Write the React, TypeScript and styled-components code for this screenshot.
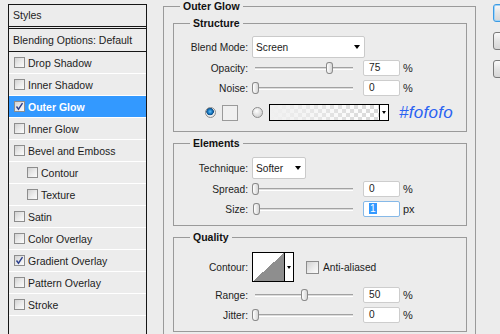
import styled, { createGlobalStyle } from "styled-components";

const GlobalStyle = createGlobalStyle`
  html, body {
    margin: 0;
    padding: 0;
  }
  body {
    background: #ececec;
    overflow: hidden;
    font-family: "Liberation Sans", Arial, sans-serif;
    font-size: 10.2px;
    color: #1c1c1c;
  }
`;

const Window = styled.div`
  display: flex;
  align-items: flex-start;
  width: 500px;
  height: 334px;
  padding-left: 8px;
  box-sizing: border-box;
  overflow: hidden;
`;

// ---- left list of layer styles ----
const StylesPanel = styled.div`
  flex: none;
  width: 139px;
  height: 340px;
  margin-top: 4px;
  border: 1px solid #161616;
  border-bottom: none;
  box-sizing: border-box;
  font-size: 10.5px;
`;

const PanelHeader = styled.div`
  height: 21px;
  line-height: 21px;
  padding-left: 4px;
  border-bottom: 3px double #161616;
`;

const BlendingRow = styled.div`
  height: 22px;
  line-height: 22px;
  padding-left: 4px;
  border-bottom: 1px solid #161616;
`;

const StyleItem = styled.div<{ $selected?: boolean; $sub?: boolean }>`
  display: flex;
  align-items: center;
  gap: 3px;
  height: 21px;
  padding-left: ${(p) => (p.$sub ? 18 : 5)}px;
  border-bottom: 1px solid #ffffff;
  background: ${(p) => (p.$selected ? "#3399ff" : "transparent")};
  color: ${(p) => (p.$selected ? "#ffffff" : "#1c1c1c")};
  font-weight: ${(p) => (p.$selected ? "bold" : "normal")};
`;

const CheckBox = styled.span<{ $size?: number; $ml?: number }>`
  flex: none;
  display: flex;
  align-items: center;
  justify-content: center;
  width: ${(p) => p.$size ?? 11}px;
  height: ${(p) => p.$size ?? 11}px;
  margin-left: ${(p) => p.$ml ?? 0}px;
  box-sizing: border-box;
  border: 1px solid #8d8d8d;
  background: linear-gradient(135deg, #d2d2d2 0%, #ececec 55%, #fbfbfb 100%);
`;

// ---- effect settings ----
const EffectGroup = styled.fieldset`
  flex: none;
  width: 313px;
  min-height: 350px;
  margin: 0 0 0 16px;
  padding: 4px 8px 0 9px;
  border: 1px solid #9a9a9a;
  box-sizing: border-box;
`;

const Legend = styled.legend<{ $inset: number }>`
  margin-left: ${(p) => p.$inset}px;
  padding: 0 3px;
  font-size: 10.5px;
  font-weight: bold;
  line-height: 13px;
  color: #111;
`;

const Group = styled.fieldset<{ $top: number; $bottom: number }>`
  margin: 0 0 5px;
  padding: ${(p) => p.$top}px 0 ${(p) => p.$bottom}px;
  border: 1px solid #9a9a9a;
  min-width: 0;
`;

const Row = styled.div<{ $mt?: number; $h?: number }>`
  display: flex;
  align-items: center;
  height: ${(p) => p.$h ?? 16}px;
  margin-top: ${(p) => p.$mt ?? 0}px;
`;

const Label = styled.span`
  flex: none;
  width: 74px;
  margin-right: 4px;
  text-align: right;
`;

const Select = styled.div<{ $w: number }>`
  flex: none;
  display: flex;
  align-items: center;
  justify-content: space-between;
  width: ${(p) => p.$w}px;
  height: 22px;
  padding: 0 4px 0 3px;
  box-sizing: border-box;
  border: 1px solid #cacaca;
  border-radius: 2px;
  background: #ffffff;
`;

const Arrow = styled.span`
  width: 0;
  height: 0;
  border-top: 4px solid #000;
  border-left: 3.5px solid transparent;
  border-right: 3.5px solid transparent;
`;

const Slider = styled.div`
  position: relative;
  flex: none;
  width: 101px;
  height: 16px;
`;

const Track = styled.div`
  position: absolute;
  left: 3px;
  right: 0;
  top: 7px;
  height: 1px;
  border-top: 1px solid #a2a2a2;
  border-bottom: 1px solid #ffffff;
  background: #dcdcdc;
`;

const Thumb = styled.div`
  position: absolute;
  top: 2px;
  width: 7px;
  height: 12px;
  box-sizing: border-box;
  border: 1px solid #8a8a8a;
  border-radius: 3px 3px 3px 3px / 3px 3px 4px 4px;
  background: linear-gradient(to right, #ffffff, #d6d6d6);
`;

const NumberField = styled.div<{ $focus?: boolean }>`
  flex: none;
  width: 37px;
  height: 16px;
  margin-left: 10px;
  padding-left: 5px;
  box-sizing: border-box;
  border: 1px solid ${(p) => (p.$focus ? "#86b9e8" : "#cdcdcd")};
  border-radius: 2px;
  background: #ffffff;
  line-height: 14px;
`;

const Selected = styled.span`
  background: #3399ff;
  color: #ffffff;
  padding: 0 1px;
`;

const Unit = styled.span`
  margin-left: 3px;
  font-size: 11px;
`;

const Radio = styled.span<{ $on?: boolean; $ml: number }>`
  flex: none;
  width: 11px;
  height: 11px;
  margin-left: ${(p) => p.$ml}px;
  box-sizing: border-box;
  border: 1px solid #8c8c8c;
  border-radius: 50%;
  background: ${(p) =>
    p.$on
      ? "radial-gradient(circle at 45% 40%, #6fc3f5 0, #1c7fc8 2px, #0b4a83 3.5px, #f2f2f2 4px, #d8d8d8 100%)"
      : "radial-gradient(circle at 40% 35%, #ffffff 0, #e8e8e8 3px, #c6c6c6 100%)"};
`;

const Swatch = styled.span`
  flex: none;
  width: 16px;
  height: 16px;
  margin-left: 6px;
  box-sizing: border-box;
  border: 1px solid #9a9a9a;
  background: #f0f0f0;
`;

const GradientPicker = styled.div`
  flex: none;
  display: flex;
  width: 120px;
  height: 17px;
  margin-left: 6px;
  box-sizing: border-box;
  border: 1px solid #000;
`;

const GradientPreview = styled.div`
  flex: 1;
  background: linear-gradient(to right, #f0f0f0 0%, rgba(240, 240, 240, 0) 100%),
    repeating-conic-gradient(#d8d8d8 0 25%, #ffffff 0 50%) 0 0 / 8px 8px;
`;

const PickerButton = styled.div`
  flex: none;
  display: flex;
  align-items: center;
  justify-content: center;
  width: 8px;
  border-left: 1px solid #000;
  background: #ffffff;
`;

const SmallArrow = styled.span`
  width: 0;
  height: 0;
  border-top: 3px solid #000;
  border-left: 2.5px solid transparent;
  border-right: 2.5px solid transparent;
`;

const ColorNote = styled.span`
  margin-left: 10px;
  font-size: 17px;
  font-style: italic;
  color: #2a62f2;
  letter-spacing: 0.3px;
`;

const ContourPicker = styled.div`
  flex: none;
  display: flex;
  width: 42px;
  height: 30px;
  box-sizing: border-box;
  border: 1px solid #000;
`;

const ContourPreview = styled.div`
  flex: 1;
  background: linear-gradient(to top left, #8e8e8e 50%, #ffffff 50%);
`;

const CheckLabel = styled.span`
  margin-left: 4px;
`;

// ---- dialog buttons (labels sit outside the visible window) ----
const ButtonColumn = styled.div`
  flex: none;
  display: flex;
  flex-direction: column;
  gap: 10px;
  margin: 4px 0 0 17px;
`;

const DialogButton = styled.button<{ $default?: boolean }>`
  width: 80px;
  height: 18px;
  padding: 0;
  border: 1px solid ${(p) => (p.$default ? "#3c9be4" : "#7a7a7a")};
  border-radius: 3px;
  background: linear-gradient(#fafafa, #e4e4e4 50%, #d6d6d6);
  box-shadow: ${(p) => (p.$default ? "inset 0 0 0 1px #9fd3f7" : "none")};
`;

const styleItems = [
  { label: "Drop Shadow" },
  { label: "Inner Shadow" },
  { label: "Outer Glow", checked: true, selected: true },
  { label: "Inner Glow" },
  { label: "Bevel and Emboss" },
  { label: "Contour", sub: true },
  { label: "Texture", sub: true },
  { label: "Satin" },
  { label: "Color Overlay" },
  { label: "Gradient Overlay", checked: true },
  { label: "Pattern Overlay" },
  { label: "Stroke" },
];

function Tick() {
  return (
    <svg width="9" height="9" viewBox="0 0 9 9">
      <path d="M1.5 4.5 L3.5 7.2 L7.5 1.2" fill="none" stroke="#2b3f8c" strokeWidth="1.4" />
    </svg>
  );
}

function SliderControl({ value }: { value: number }) {
  // thumb travels along the 98px groove
  return (
    <Slider>
      <Track />
      <Thumb style={{ left: Math.round(value * 0.98) }} />
    </Slider>
  );
}

function SliderRow({ label, value, unit, mt, focus }: { label: string; value: number; unit: string; mt: number; focus?: boolean }) {
  return (
    <Row $mt={mt}>
      <Label>{label}</Label>
      <SliderControl value={value} />
      <NumberField $focus={focus}>{focus ? <Selected>{value}</Selected> : value}</NumberField>
      <Unit>{unit}</Unit>
    </Row>
  );
}

export default function App() {
  return (
    <>
      <GlobalStyle />
      <Window>
        <StylesPanel>
          <PanelHeader>Styles</PanelHeader>
          <BlendingRow>Blending Options: Default</BlendingRow>
          {styleItems.map((item) => (
            <StyleItem key={item.label} $selected={item.selected} $sub={item.sub}>
              <CheckBox>{item.checked && <Tick />}</CheckBox>
              {item.label}
            </StyleItem>
          ))}
        </StylesPanel>

        <EffectGroup>
          <Legend $inset={7}>Outer Glow</Legend>

          <Group $top={6} $bottom={10}>
            <Legend $inset={16}>Structure</Legend>
            <Row $h={22}>
              <Label>Blend Mode:</Label>
              <Select $w={113}>
                Screen
                <Arrow />
              </Select>
            </Row>
            <SliderRow label="Opacity:" value={75} unit="%" mt={2} />
            <SliderRow label="Noise:" value={0} unit="%" mt={4} />
            <Row $mt={8} $h={17}>
              <Radio $on $ml={31} />
              <Swatch />
              <Radio $ml={14} />
              <GradientPicker>
                <GradientPreview />
                <PickerButton>
                  <SmallArrow />
                </PickerButton>
              </GradientPicker>
              <ColorNote>#fofofo</ColorNote>
            </Row>
          </Group>

          <Group $top={7} $bottom={8}>
            <Legend $inset={16}>Elements</Legend>
            <Row $h={22}>
              <Label>Technique:</Label>
              <Select $w={54}>
                Softer
                <Arrow />
              </Select>
            </Row>
            <SliderRow label="Spread:" value={0} unit="%" mt={2} />
            <SliderRow label="Size:" value={1} unit="px" mt={4} focus />
          </Group>

          <Group $top={8} $bottom={8}>
            <Legend $inset={16}>Quality</Legend>
            <Row $h={30}>
              <Label>Contour:</Label>
              <ContourPicker>
                <ContourPreview />
                <PickerButton>
                  <SmallArrow />
                </PickerButton>
              </ContourPicker>
              <CheckBox $size={13} $ml={12} />
              <CheckLabel>Anti-aliased</CheckLabel>
            </Row>
            <SliderRow label="Range:" value={50} unit="%" mt={5} />
            <SliderRow label="Jitter:" value={0} unit="%" mt={4} />
          </Group>
        </EffectGroup>

        <ButtonColumn>
          <DialogButton $default aria-label="OK" />
          <DialogButton aria-label="Cancel" />
          <DialogButton aria-label="New Style..." />
        </ButtonColumn>
      </Window>
    </>
  );
}
